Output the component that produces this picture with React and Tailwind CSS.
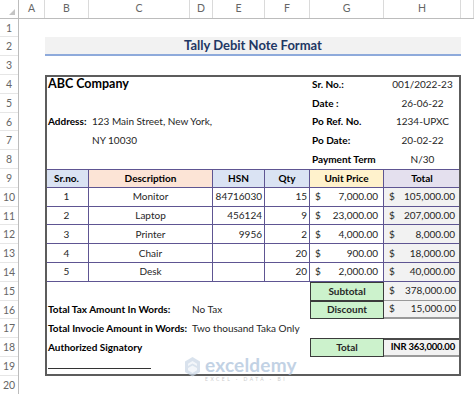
import React from 'react'

const columns = [
  { label: 'A', width: 'w-[26px]' },
  { label: 'B', width: 'w-[44px]' },
  { label: 'C', width: 'w-[101px]' },
  { label: 'D', width: 'w-[23px]' },
  { label: 'E', width: 'w-[52px]' },
  { label: 'F', width: 'w-[45px]' },
  { label: 'G', width: 'w-[74px]' },
  { label: 'H', width: 'w-[77px]' },
  { label: '', width: 'w-[13px]' },
]

const rowNumbers = Array.from({ length: 20 }, (_, i) => i + 1)

const items = [
  { no: '1', desc: 'Monitor', hsn: '84716030', qty: '15', price: '7,000.00', total: '105,000.00' },
  { no: '2', desc: 'Laptop', hsn: '456124', qty: '9', price: '23,000.00', total: '207,000.00' },
  { no: '3', desc: 'Printer', hsn: '9956', qty: '2', price: '4,000.00', total: '8,000.00' },
  { no: '4', desc: 'Chair', hsn: '', qty: '20', price: '900.00', total: '18,000.00' },
  { no: '5', desc: 'Desk', hsn: '', qty: '20', price: '2,000.00', total: '40,000.00' },
]

function Money({ value, className = '' }) {
  return (
    <div className={`flex items-center justify-between pl-[5px] pr-[5px] ${className}`}>
      <span>$</span>
      <span>{value}</span>
    </div>
  )
}

function Watermark() {
  return (
    <div className="pointer-events-none absolute left-[165px] top-[337px] flex items-start gap-[4px] opacity-70">
      <svg width="17" height="24" viewBox="0 0 17 24">
        <path d="M8.5 1 L16 5.5 L16 16 L8.5 20.5 L1 16 L1 5.5 Z" fill="#c9d7e6" />
        <path d="M8.5 5 L13 7.7 L13 10 L8.5 7.4 L4 10 L4 7.7 Z" fill="#eef3f8" />
        <path d="M4 12 L8.5 9.4 L13 12 L13 14.3 L8.5 16.9 L4 14.3 Z" fill="#eef3f8" />
      </svg>
      <div className="flex flex-col leading-none">
        <span className="text-[19px] leading-[18px] font-bold tracking-[0.2px] text-[#a9c0da]">exceldemy</span>
        <span className="mt-[3px] text-[5px] tracking-[2.5px] text-[#b5b5b5]">EXCEL · DATA · BI</span>
      </div>
    </div>
  )
}

export default function App() {
  const line = 'border-[#5e5592]'
  const green = 'flex items-center justify-center border border-[#3b3b3b] bg-[#ccf2cc] font-bold'

  return (
    <div className="flex h-[394px] w-[474px] flex-col overflow-hidden bg-white font-['Lato','Noto_Sans',sans-serif] text-[#262626]">
      {/* column header */}
      <div className="flex h-[18.6px] shrink-0 border-b border-[#bcbcbc] text-[10.5px] text-[#666]">
        <div className="relative w-[19px] shrink-0 border-r border-[#bcbcbc]">
          <div className="absolute bottom-[3px] right-[3px] h-0 w-0 border-b-[6px] border-l-[6px] border-b-[#c4c4c4] border-l-transparent" />
        </div>
        {columns.map((col, i) => (
          <div key={i} className={`${col.width} flex shrink-0 items-center justify-center border-r border-[#dadada]`}>
            {col.label}
          </div>
        ))}
      </div>

      <div className="flex flex-1">
        {/* row header */}
        <div className="grid w-[19px] shrink-0 grid-rows-[repeat(20,18.8px)] border-r border-[#bcbcbc] text-[10.5px] text-[#666]">
          {rowNumbers.map((n) => (
            <div key={n} className="flex items-center justify-center border-b border-[#e6e6e6] pt-[2px]">
              {n}
            </div>
          ))}
        </div>

        {/* sheet */}
        <div className="relative grid flex-1 grid-cols-[26px_44px_101px_23px_52px_45px_74px_77px_13px] grid-rows-[repeat(20,18.8px)] text-[10px]">
          <div className="col-start-2 col-end-9 row-start-2 flex items-center justify-center border-b-2 border-[#8eaadb] bg-[#f2f2f2] text-[13px] font-bold text-[#1f3864]">
            Tally Debit Note Format
          </div>

          <div className="col-start-2 col-end-6 row-start-4 flex items-center pl-[3px] text-[12.5px] font-bold text-black">ABC Company</div>
          <div className="col-start-7 row-start-4 flex items-center pl-[2px] font-bold text-black">Sr. No.:</div>
          <div className="col-start-8 row-start-4 flex items-center justify-center">001/2022-23</div>

          <div className="col-start-7 row-start-5 flex items-center pl-[2px] font-bold text-black">Date :</div>
          <div className="col-start-8 row-start-5 flex items-center justify-center">26-06-22</div>

          <div className="col-start-2 row-start-6 flex items-center pl-[3px] font-bold text-black">Address:</div>
          <div className="col-start-3 col-end-6 row-start-6 flex items-center pl-[3px]">123 Main Street, New York,</div>
          <div className="col-start-7 row-start-6 flex items-center pl-[2px] font-bold text-black">Po Ref. No.</div>
          <div className="col-start-8 row-start-6 flex items-center justify-center">1234-UPXC</div>

          <div className="col-start-3 col-end-6 row-start-7 flex items-center pl-[3px]">NY 10030</div>
          <div className="col-start-7 row-start-7 flex items-center pl-[2px] font-bold text-black">Po Date:</div>
          <div className="col-start-8 row-start-7 flex items-center justify-center">20-02-22</div>

          <div className="col-start-7 row-start-8 flex items-center pl-[2px] font-bold text-black">Payment Term</div>
          <div className="col-start-8 row-start-8 flex items-center justify-center">N/30</div>

          {/* items table */}
          <div className="col-start-2 col-end-9 row-start-9 row-end-15 grid grid-cols-[44px_124px_52px_45px_74px_77px] grid-rows-[repeat(6,18.8px)]">
            <div className={`flex items-center justify-center border-y border-r ${line} bg-[#dae3f3] font-bold text-black`}>Sr.no.</div>
            <div className={`flex items-center justify-center border-y border-r ${line} bg-[#fce4d6] font-bold text-black`}>Description</div>
            <div className={`flex items-center justify-center border-y border-r ${line} bg-[#dae3f3] font-bold text-black`}>HSN</div>
            <div className={`flex items-center justify-center border-y border-r ${line} bg-[#dae3f3] font-bold text-black`}>Qty</div>
            <div className={`flex items-center justify-center border-y border-r ${line} bg-[#fff2cc] font-bold text-black`}>Unit Price</div>
            <div className={`flex items-center justify-center border-y border-r ${line} bg-[#e4e0ee] font-bold text-black`}>Total</div>
            {items.map((item) => (
              <React.Fragment key={item.no}>
                <div className={`flex items-center justify-center border-b border-r ${line}`}>{item.no}</div>
                <div className={`flex items-center justify-center border-b border-r ${line}`}>{item.desc}</div>
                <div className={`flex items-center justify-end border-b border-r ${line} pr-[2px]`}>{item.hsn}</div>
                <div className={`flex items-center justify-end border-b border-r ${line} pr-[2px]`}>{item.qty}</div>
                <Money value={item.price} className={`border-b border-r ${line}`} />
                <Money value={item.total} className={`border-b border-r ${line} bg-[#f2f2f2]`} />
              </React.Fragment>
            ))}
          </div>

          {/* totals */}
          <div className={`col-start-7 row-start-15 ${green}`}>Subtotal</div>
          <Money value="378,000.00" className="col-start-8 row-start-15 border-b border-[#9a9a9a] bg-[#f2f2f2]" />
          <div className={`col-start-7 row-start-16 ${green}`}>Discount</div>
          <Money value="15,000.00" className="col-start-8 row-start-16 border-b-2 border-[#9a9a9a] bg-[#f2f2f2]" />
          <div className={`col-start-7 row-start-18 ${green}`}>Total</div>
          <div className="col-start-8 row-start-18 flex items-center justify-end border-y-2 border-t-[#4a4a4a] border-b-[#9a9a9a] bg-[#f2f2f2] pr-[6px] text-[9.5px] font-bold tracking-[-0.2px] text-black">
            INR 363,000.00
          </div>

          <div className="col-start-2 col-end-5 row-start-16 flex items-center pl-[3px] font-bold text-black">Total Tax Amount In Words:</div>
          <div className="col-start-4 col-end-7 row-start-16 flex items-center pl-[2px]">No Tax</div>
          <div className="col-start-2 col-end-5 row-start-17 flex items-center pl-[3px] font-bold text-black">Total Invocie Amount in Words:</div>
          <div className="col-start-4 col-end-7 row-start-17 flex items-center pl-[2px]">Two thousand Taka Only</div>
          <div className="col-start-2 col-end-5 row-start-18 flex items-center pl-[3px] font-bold text-black">Authorized Signatory</div>
          <div className="col-start-2 col-end-4 row-start-19 flex items-center pl-[3px]">
            <div className="mt-[4px] w-[103px] border-b border-[#333]" />
          </div>

          {/* outer frame */}
          <div className="pointer-events-none col-start-2 col-end-9 row-start-4 row-end-20 border-2 border-[#5c5c5c]" />

          <Watermark />
        </div>
      </div>
    </div>
  )
}
